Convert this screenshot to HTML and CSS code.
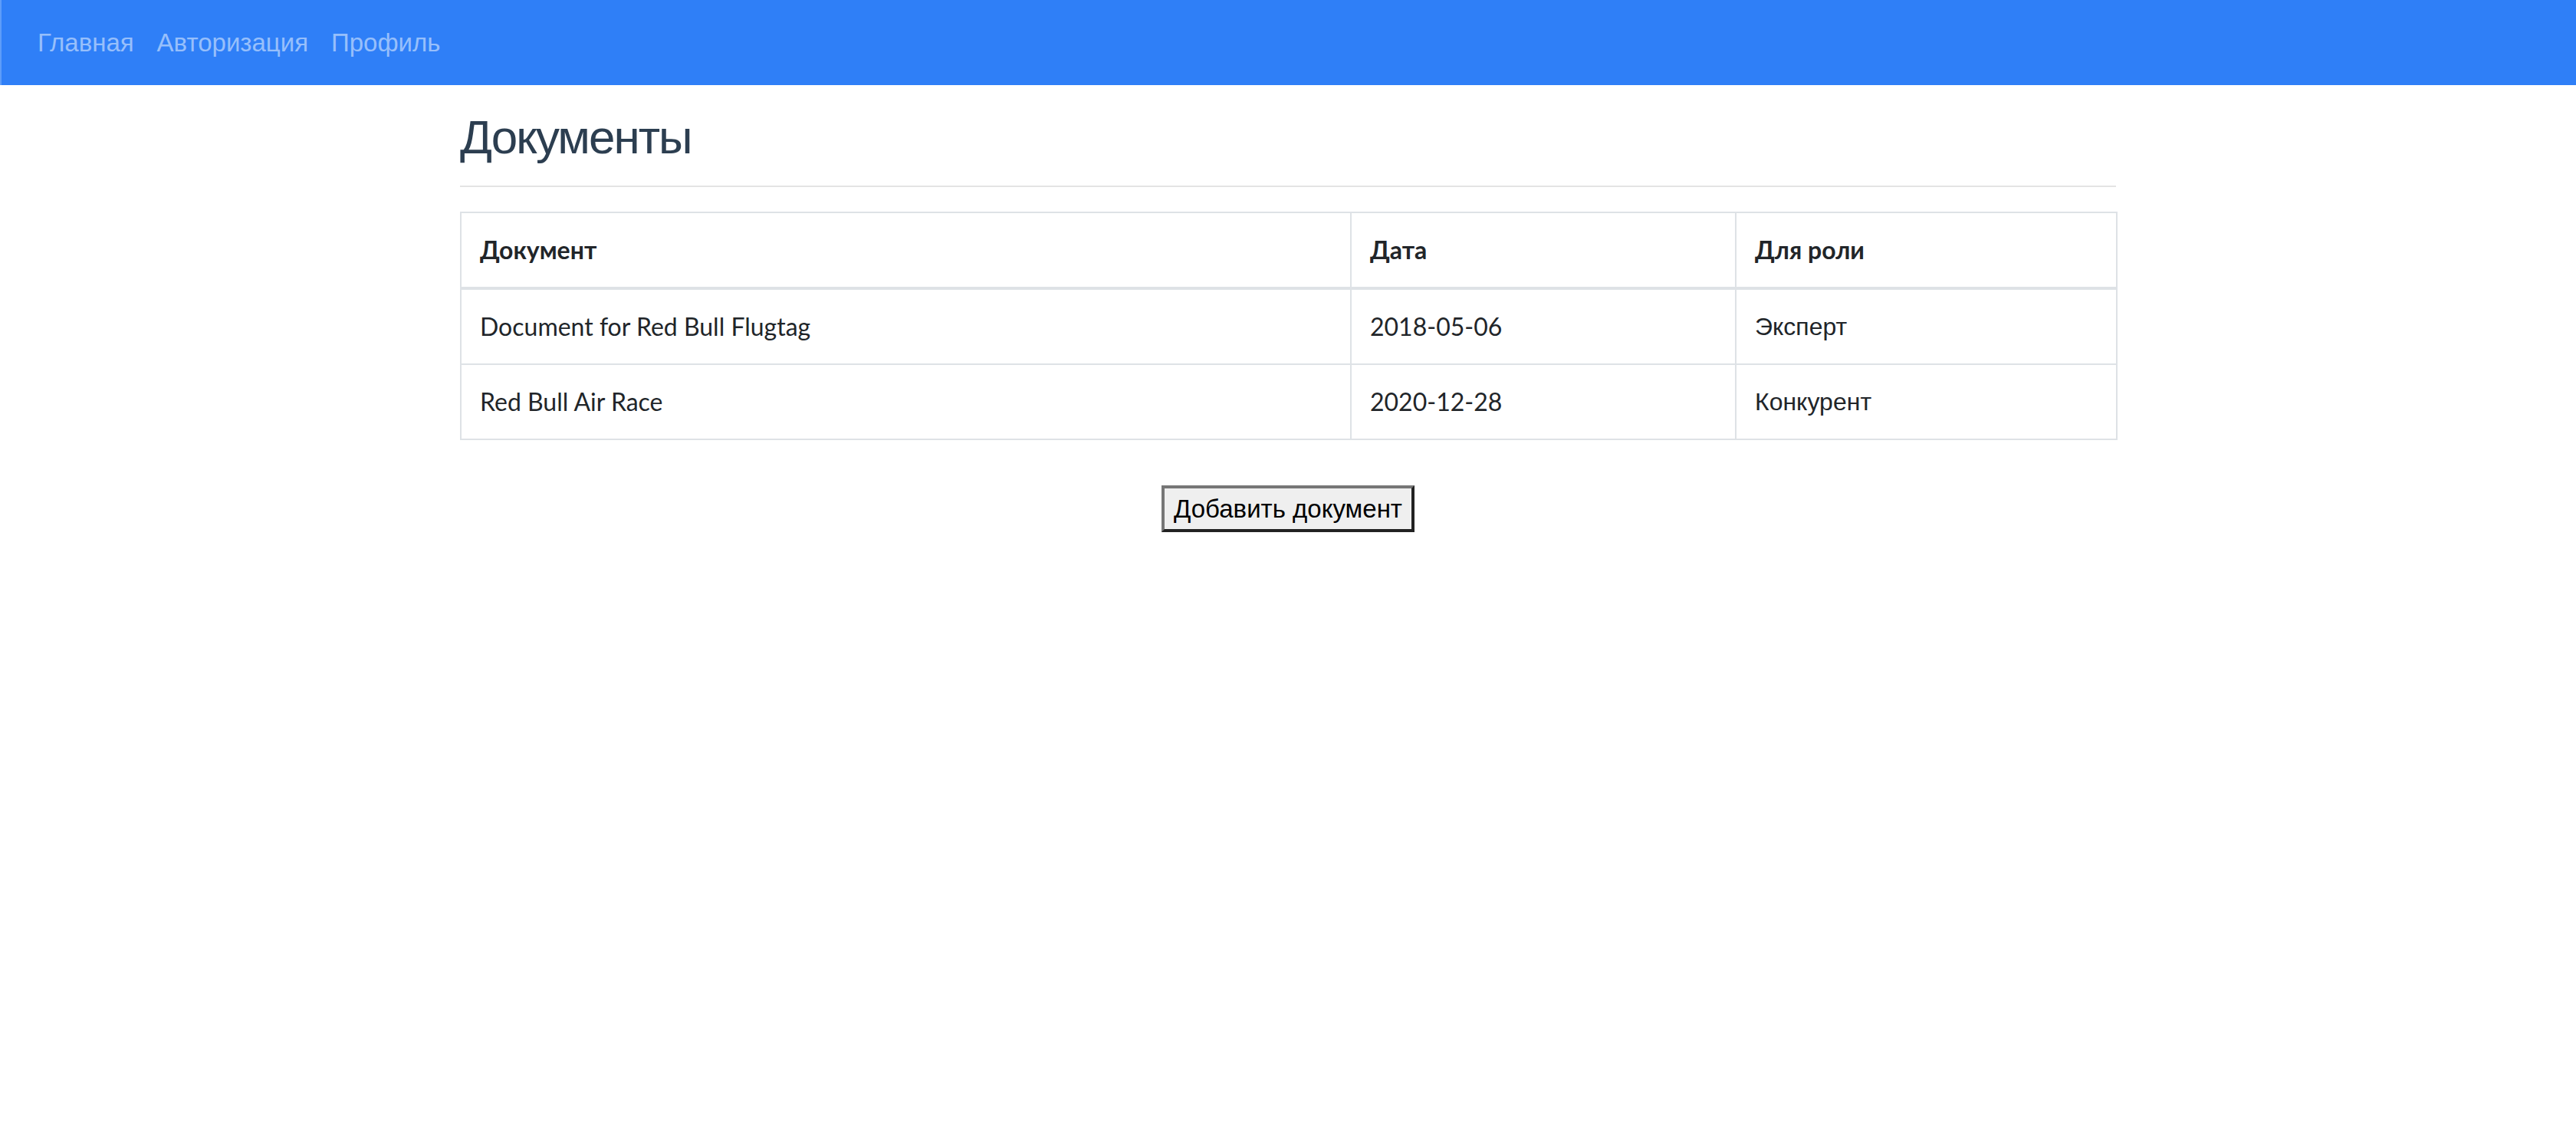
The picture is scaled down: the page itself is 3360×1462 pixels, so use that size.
FILE: index.html
```html
<!DOCTYPE html>
<html lang="ru">
<head>
<meta charset="utf-8">
<title>Документы</title>
<link rel="stylesheet" href="styles.css">
</head>
<body>
<nav class="navbar">
  <a class="nav-link" href="#">Главная</a>
  <a class="nav-link" href="#">Авторизация</a>
  <a class="nav-link" href="#">Профиль</a>
</nav>
<main class="container">
  <h2 class="title">Документы</h2>
  <hr class="divider">
  <table class="docs">
    <colgroup>
      <col class="col-doc">
      <col class="col-date">
      <col class="col-role">
    </colgroup>
    <thead>
      <tr>
        <th>Документ</th>
        <th>Дата</th>
        <th>Для роли</th>
      </tr>
    </thead>
    <tbody>
      <tr>
        <td>Document for Red Bull Flugtag</td>
        <td>2018-05-06</td>
        <td class="role">Эксперт</td>
      </tr>
      <tr>
        <td>Red Bull Air Race</td>
        <td>2020-12-28</td>
        <td class="role">Конкурент</td>
      </tr>
    </tbody>
  </table>
  <div class="actions">
    <button class="add-btn" type="button">Добавить документ</button>
  </div>
</main>
</body>
</html>
```
FILE: styles.css
```css
html, body {
  margin: 0;
  padding: 0;
  background: #ffffff;
}

body {
  font-family: "Lato", "Noto Sans", sans-serif;
  color: #212529;
}

.navbar {
  display: flex;
  align-items: center;
  background: #2f7ff7;
  border-left: 2px solid #5d9cf9;
  padding: 16px 30px 15px 30px;
}

.nav-link {
  font-family: "Liberation Sans", Arial, sans-serif;
  font-size: 33px;
  line-height: 48px;
  padding: 16px 15px;
  color: #97bffb;
  text-decoration: none;
}

.nav-link:first-child {
  padding-left: 17px;
}

.container {
  width: 2160px;
  margin: 0 auto;
}

.title {
  font-family: "Liberation Sans", Arial, sans-serif;
  font-weight: 400;
  font-size: 62px;
  line-height: 77px;
  letter-spacing: -2px;
  color: #2c3e50;
  margin: 29px 0 0 0;
}

.divider {
  border: 0;
  border-top: 2px solid #e4e4e4;
  margin: 25px 0 32px 0;
  height: 0;
}

.docs {
  width: 2160px;
  table-layout: fixed;
  border-collapse: collapse;
  border: 2px solid #dee2e6;
  font-size: 32px;
  line-height: 48px;
}

.col-doc { width: 1161px; }
.col-date { width: 502px; }
.col-role { width: 497px; }

.docs th,
.docs td {
  border: 2px solid #dee2e6;
  padding: 24px;
  text-align: left;
  vertical-align: middle;
  font-weight: 400;
}

.docs th {
  font-weight: 700;
  border-bottom-width: 4px;
}

.docs .role {
  font-family: "Liberation Sans", Arial, sans-serif;
}

.actions {
  text-align: center;
  margin-top: 59px;
}

.add-btn {
  font-family: "Liberation Sans", Arial, sans-serif;
  font-size: 33px;
  line-height: 37px;
  color: #000000;
  background: #efefef;
  border: 4px solid;
  border-color: #767676 #222222 #222222 #767676;
  padding: 8px 12px;
  margin: 0;
  border-radius: 0;
}
```
